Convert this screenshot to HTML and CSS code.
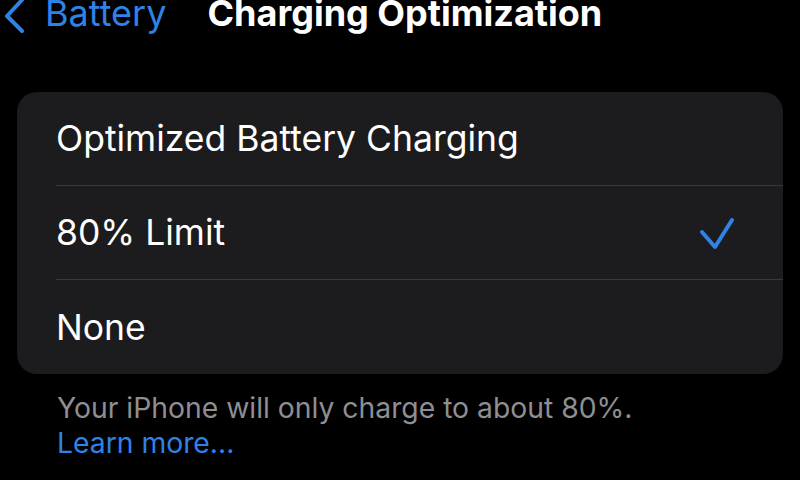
FILE: index.html
```html
<!DOCTYPE html>
<html>
<head>
<meta charset="utf-8">
<link rel="stylesheet" href="styles.css">
</head>
<body>
<div class="screen">
  <header class="nav">
    <div class="back">
      <svg class="chev" width="22" height="36" viewBox="0 0 22 36"><path d="M19 2 L4 18 L19 33" fill="none" stroke="#2f82e6" stroke-width="4" stroke-linecap="round" stroke-linejoin="round"/></svg>
      <span class="back-label">Battery</span>
    </div>
    <h1 class="title">Charging Optimization</h1>
  </header>
  <div class="card">
    <div class="row"><span>Optimized Battery Charging</span></div>
    <div class="row"><span>80% Limit</span>
      <svg class="check" width="36" height="34" viewBox="0 0 36 34"><path d="M3 15 L16 30 L33 3" fill="none" stroke="#2f82e6" stroke-width="4" stroke-linecap="round" stroke-linejoin="round"/></svg>
    </div>
    <div class="row last"><span>None</span></div>
  </div>
  <p class="foot">Your iPhone will only charge to about 80%.<br><a class="link">Learn more...</a></p>
</div>
</body>
</html>
```
FILE: styles.css
```css
html, body { margin: 0; padding: 0; background: #000; }
body { font-family: Inter, "Noto Sans", sans-serif; color: #fff; width: 800px; height: 480px; overflow: hidden; }
.screen { display: flex; flex-direction: column; }
.nav { display: flex; align-items: flex-start; height: 40px; margin-top: -7px; }
.back { display: flex; align-items: flex-start; gap: 20px; margin-left: 3px; }
.chev { margin-top: 5px; }
.back-label { color: #2f82e6; font-size: 36px; line-height: 40px; }
.title { margin: 0 0 0 41px; font-size: 36px; font-weight: 650; line-height: 40px; }
.card { margin: 59px 17px 0 17px; background: #1c1c1e; border-radius: 20px; overflow: hidden; }
.row { height: 93px; margin-left: 39px; padding-right: 48px; display: flex; align-items: center; justify-content: space-between; border-bottom: 1px solid #38383a; font-size: 35.5px; }
.row.last { border-bottom: none; height: 94px; }
.check { margin-top: 2px; }
.foot { margin: 17px 0 0 57px; font-size: 28.3px; line-height: 35px; color: #8e8e93; }
.link { color: #2f82e6; }
```
